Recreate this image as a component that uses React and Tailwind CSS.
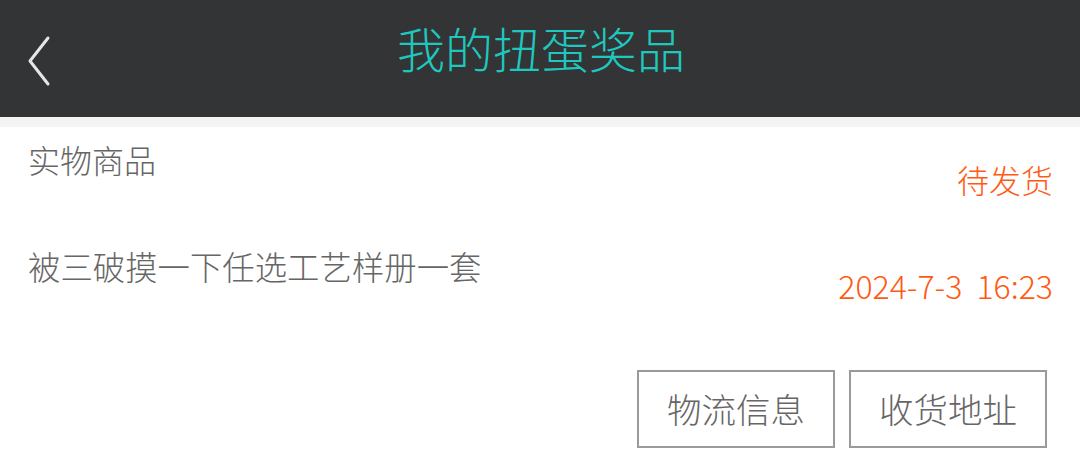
import React from "react";

const font = { fontFamily: '"Noto Sans CJK SC", "Noto Sans", sans-serif' };

function Header() {
  return (
    <div className="h-[117px] bg-[#333436] flex items-center relative">
      <button className="absolute left-[26px] top-[34px] w-[26px] h-[54px]">
        <svg width="26" height="54" viewBox="0 0 26 54" fill="none">
          <path d="M22 4 L4 27 L22 50" stroke="#e6e6e6" strokeWidth="3" strokeLinecap="round" strokeLinejoin="round" />
        </svg>
      </button>
      <h1 className="w-full text-center text-[48px] leading-[48px] font-light text-[#1fc8bf] pl-[2px] pb-[24px]">
        我的扭蛋奖品
      </h1>
    </div>
  );
}

function PrizeItem() {
  return (
    <div className="pl-[28px] pr-[27px]">
      <div className="flex justify-between items-start">
        <div className="text-[32px] leading-[32px] text-[#666] font-light pt-[16px]">实物商品</div>
        <div className="text-[32px] leading-[32px] text-[#ff5a14] font-light pt-[36px]">待发货</div>
      </div>
      <div className="flex justify-between items-start">
        <div className="text-[32.4px] leading-[32px] text-[#666] font-light pt-[55px]">被三破摸一下任选工艺样册一套</div>
        <div className="text-[32px] leading-[32px] text-[#ff5a14] font-light pt-[74px] whitespace-pre">2024-7-3  16:23</div>
      </div>
      <div className="flex justify-end gap-[14px] pt-[69px] pr-[6px]">
        <button className="w-[198px] h-[78px] border-2 border-[#9a9a9a] text-[34.5px] text-[#666] font-light">物流信息</button>
        <button className="w-[198px] h-[78px] border-2 border-[#9a9a9a] text-[34.5px] text-[#666] font-light">收货地址</button>
      </div>
    </div>
  );
}

export default function App() {
  return (
    <div className="w-[1080px] h-[470px] bg-white overflow-hidden" style={font}>
      <Header />
      <div className="h-[10px] bg-[#f4f4f4]" />
      <PrizeItem />
    </div>
  );
}
